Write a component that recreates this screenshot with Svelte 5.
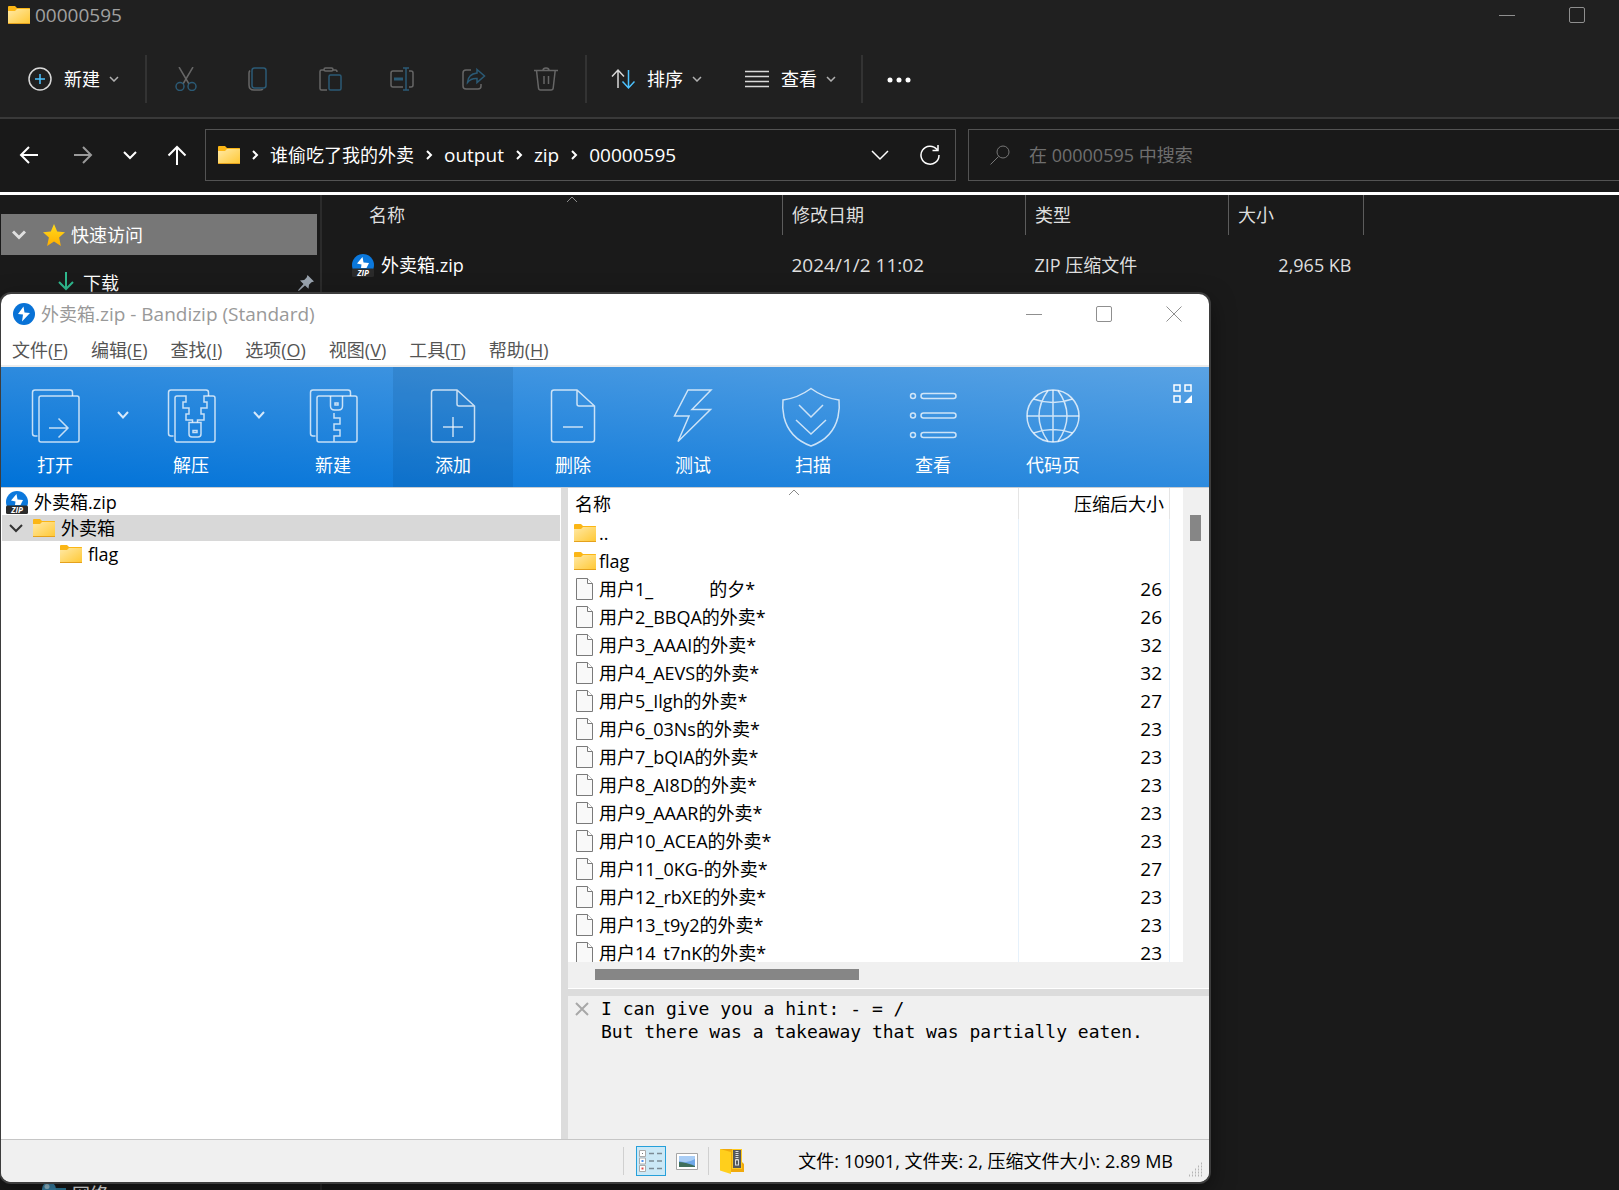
<script lang="ts">
  interface Entry {
    name: string;
    size?: number;
    folder?: boolean;
  }

  const crumbs = ['谁偷吃了我的外卖', 'output', 'zip', '00000595'];

  const menus = [
    { label: '文件', key: 'F' },
    { label: '编辑', key: 'E' },
    { label: '查找', key: 'I' },
    { label: '选项', key: 'O' },
    { label: '视图', key: 'V' },
    { label: '工具', key: 'T' },
    { label: '帮助', key: 'H' }
  ];

  const tools = [
    { id: 'open', label: '打开', more: true },
    { id: 'extract', label: '解压', more: true },
    { id: 'new', label: '新建' },
    { id: 'add', label: '添加' },
    { id: 'delete', label: '删除' },
    { id: 'test', label: '测试' },
    { id: 'scan', label: '扫描' },
    { id: 'view', label: '查看' },
    { id: 'codepage', label: '代码页' }
  ];

  const entries: Entry[] = [
    { name: '..', folder: true },
    { name: 'flag', folder: true },
    { name: '用户1_' + '\u00a0'.repeat(12) + '的夕*', size: 26 },
    { name: '用户2_BBQA的外卖*', size: 26 },
    { name: '用户3_AAAI的外卖*', size: 32 },
    { name: '用户4_AEVS的外卖*', size: 32 },
    { name: '用户5_Ilgh的外卖*', size: 27 },
    { name: '用户6_03Ns的外卖*', size: 23 },
    { name: '用户7_bQIA的外卖*', size: 23 },
    { name: '用户8_AI8D的外卖*', size: 23 },
    { name: '用户9_AAAR的外卖*', size: 23 },
    { name: '用户10_ACEA的外卖*', size: 23 },
    { name: '用户11_0KG-的外卖*', size: 27 },
    { name: '用户12_rbXE的外卖*', size: 23 },
    { name: '用户13_t9y2的外卖*', size: 23 },
    { name: '用户14_t7nK的外卖*', size: 23 }
  ];

  let activeTool = $state('add');
  let query = $state('');
  let showComment = $state(true);
</script>

{#snippet folder()}
  <svg class="folder" viewBox="0 0 22 18" aria-hidden="true">
    <path d="M0 1q0-1 1-1h6l2 2h12.500q.5 0 .5.5V8H0z" fill="#fbb615" />
    <path d="M0 5h7l2-2h13v14.500H0z" fill="url(#folder-fill)" />
    <path d="M0 17h22v1H0z" fill="#e5a11c" />
  </svg>
{/snippet}

{#snippet zip()}
  <svg class="zip" viewBox="0 0 22 23" aria-hidden="true">
    <circle cx="11" cy="11" r="11" fill="#0b78dc" />
    <path d="M10.500 3 5 9.500l4.500 1-.5 3.500h5.500l2.500-5-5.500-.5z" fill="#fff" />
    <rect x="0" y="14.500" width="22" height="8.500" rx="1.500" fill="#2b2b2b" />
    <text x="11" y="21.500" text-anchor="middle" fill="#fff" font-size="8" font-weight="700" font-style="italic">ZIP</text>
  </svg>
{/snippet}

{#snippet chevron()}
  <svg class="chev" viewBox="0 0 10 6" aria-hidden="true"><path d="m1 1 4 4 4-4" /></svg>
{/snippet}

{#snippet caption()}
  <button type="button" aria-label="最小化"><svg viewBox="0 0 16 16"><path d="M0 8.500h16" /></svg></button>
  <button type="button" aria-label="最大化"><svg viewBox="0 0 16 16"><rect x=".5" y=".5" width="15" height="15" rx="1.500" /></svg></button>
  <button type="button" aria-label="关闭"><svg viewBox="0 0 16 16"><path d="m.5.5 15 15m0-15-15 15" /></svg></button>
{/snippet}

<svg class="defs" aria-hidden="true">
  <defs>
    <linearGradient id="folder-fill" x1="0" y1="0" x2="1" y2="1">
      <stop offset="0" stop-color="#ffe9a6" />
      <stop offset="1" stop-color="#ffc834" />
    </linearGradient>
    <linearGradient id="star-fill" x1="0" y1="0" x2="0" y2="1">
      <stop offset="0" stop-color="#ffdb1c" />
      <stop offset="1" stop-color="#ffae00" />
    </linearGradient>
  </defs>
</svg>

<div class="explorer">
  <header class="titlebar">
    {@render folder()}
    <span class="title latin">00000595</span>
    <div class="caption">{@render caption()}</div>
  </header>

  <div class="commands">
    <button type="button" class="command command--new">
      <svg viewBox="0 0 24 24"><circle cx="12" cy="12" r="11" /><path class="accent" d="M12 7v10M7 12h10" /></svg>
      新建 {@render chevron()}
    </button>
    <span class="rule"></span>
    <div class="icons">
      <button type="button" disabled aria-label="剪切">
        <svg viewBox="0 0 24 24"><path d="M5 0l10 17M19 0 9 17" /><circle class="accent" cx="6" cy="19.500" r="4" /><circle class="accent" cx="18" cy="19.500" r="4" /></svg>
      </button>
      <button type="button" disabled aria-label="复制">
        <svg viewBox="0 0 24 24"><path d="M4 3.500Q3 4.500 3 6v12q0 5 5 5h6q2 0 3-1" /><rect class="accent" x="6" y="1" width="14" height="20" rx="2.500" /></svg>
      </button>
      <button type="button" disabled aria-label="粘贴">
        <svg viewBox="0 0 24 24"><path d="M6 3H3.500Q2 3 2 4.500v17Q2 23 3.500 23H9M15 3h2.500Q19 3 19 5" /><rect x="6" y="1" width="9" height="3" rx="1.500" /><rect class="accent" x="11" y="8" width="12" height="15" rx="1.500" /></svg>
      </button>
      <button type="button" disabled aria-label="重命名">
        <svg viewBox="0 0 24 24"><path d="M13 4H3Q1 4 1 6v12q0 2 2 2h10M19 4h2q2 0 2 2v12q0 2-2 2h-2" /><path class="accent" d="M16 1v22M13 1h6M13 23h6" /><path class="accent thick" d="M4 12h9" /></svg>
      </button>
      <button type="button" disabled aria-label="共享">
        <svg viewBox="0 0 24 24"><path d="M9 3H4Q1 3 1 6v13q0 3 3 3h12q3 0 3-3v-2" /><path class="accent" d="M15 2.500 22.500 9 15 15.500v-4q-6-.5-9.500 4 .5-8.500 9.500-9.500z" /></svg>
      </button>
      <button type="button" disabled aria-label="删除">
        <svg viewBox="0 0 24 24"><path d="M0 3.500h24M2.500 3.500l2 17.500q.2 2 2 2h10.500q2 0 2.200-2l2-17.500M9 3.500q0-2.500 3-2.500t3 2.500M10 9v8M14.500 9v8" /></svg>
      </button>
    </div>
    <span class="rule"></span>
    <button type="button" class="command command--sort">
      <svg viewBox="0 0 24 24"><path d="M7 21V3M1 9.500 7 3l6 6.500" /><path class="accent" d="M17.500 3v18M11.500 14.500l6 6.500 6-6.500" /></svg>
      排序 {@render chevron()}
    </button>
    <button type="button" class="command command--view">
      <svg viewBox="0 0 24 24"><path d="M0 4.500h24M0 9.500h24M0 14.500h24M0 19.500h24" /></svg>
      查看 {@render chevron()}
    </button>
    <span class="rule"></span>
    <button type="button" class="command command--more" aria-label="更多">
      <svg viewBox="0 0 24 24"><g fill="#fff" stroke="none"><circle cx="3" cy="13" r="2.500" /><circle cx="12" cy="13" r="2.500" /><circle cx="21" cy="13" r="2.500" /></g></svg>
    </button>
  </div>

  <div class="navbar">
    <nav class="history">
      <button type="button" aria-label="返回"><svg viewBox="0 0 20 20"><path d="M19 10H2M10 2l-8 8 8 8" /></svg></button>
      <button type="button" class="dim" aria-label="前进"><svg viewBox="0 0 20 20"><path d="M1 10h17M10 2l8 8-8 8" /></svg></button>
      <button type="button" aria-label="最近位置"><svg viewBox="0 0 20 20"><path d="m4 7 6 6 6-6" /></svg></button>
      <button type="button" aria-label="上移"><svg viewBox="0 0 20 20"><path d="M10 20V2M1.500 10.500 10 2l8.500 8.500" /></svg></button>
    </nav>
    <div class="address">
      {@render folder()}
      {#each crumbs as crumb, i}
        <svg class="sep" viewBox="0 0 8 10" aria-hidden="true"><path d="m2 1 4 4-4 4" /></svg>
        <a href="#{i}" class:latin={i > 0}>{crumb}</a>
      {/each}
      <div class="address-end">
        <button type="button" aria-label="历史记录"><svg viewBox="0 0 20 20"><path d="m2 6 8 8 8-8" /></svg></button>
        <button type="button" aria-label="刷新"><svg viewBox="0 0 20 20"><path d="M17 4.500A9 9 0 1 0 19 10M18 0v5.500h-5.500" /></svg></button>
      </div>
    </div>
    <label class="search">
      <svg viewBox="0 0 20 20" aria-hidden="true"><circle cx="13" cy="7" r="6" /><path d="m8.500 11.500-8 8" /></svg>
      <input type="text" placeholder="在 00000595 中搜索" aria-label="搜索" bind:value={query} />
    </label>
  </div>

  <div class="content">
    <aside class="sidebar">
      <button type="button" class="quick">
        <svg class="expander" viewBox="0 0 14 10"><path d="m1 1.500 6 6 6-6" /></svg>
        <svg class="star" viewBox="0 0 22 22"><path d="m11 0 3.200 7.400 7.800.8-5.900 5.300 1.800 8.500L11 17.600 4.100 22l1.800-8.500L0 8.200l7.800-.8z" fill="url(#star-fill)" /></svg>
        快速访问
      </button>
      <button type="button" class="pinned">
        <svg class="download" viewBox="0 0 16 24"><path d="M8 1v16M1 11l7 7 7-7M0 22.500h16" /></svg>
        下载
        <svg class="pin" viewBox="0 0 16 16"><path d="M9.500 0 16 6.500l-2.500.8-2.500 2.500-.5 4L7 10.500.8 16 0 15.200 5.500 9 2 5.500l4.200-.5L8.700 2.500z" fill="#9aa4af" /></svg>
      </button>
      <div class="network">
        <svg class="globe" viewBox="0 0 24 20"><rect x="10" y="6" width="14" height="12" fill="#2f86a8" /><circle cx="7" cy="7" r="7" fill="#3d8fb8" /><circle cx="5" cy="4.500" r="2.500" fill="#a8d5e8" /></svg>
        网络
      </div>
    </aside>

    <table class="files">
      <thead>
        <tr>
          <th class="c-name"><svg class="sort" viewBox="0 0 12 7"><path d="m1 6 5-5 5 5" /></svg>名称</th>
          <th class="c-date">修改日期</th>
          <th class="c-type">类型</th>
          <th class="c-size">大小</th>
          <th></th>
        </tr>
      </thead>
      <tbody>
        <tr>
          <td><span class="file">{@render zip()} 外卖箱.zip</span></td>
          <td class="latin">2024/1/2 11:02</td>
          <td>ZIP 压缩文件</td>
          <td class="num">2,965 KB</td>
          <td></td>
        </tr>
      </tbody>
    </table>
  </div>

  <section class="archive" aria-label="Bandizip">
    <header class="archive-title">
      <svg class="logo" viewBox="0 0 22 22" aria-hidden="true">
        <circle cx="11" cy="11" r="11" fill="#0872d6" />
        <path d="M10.500 3.500 5 11l5 .5L9 18.500l8-8.500-5.500-.5z" fill="#fff" />
      </svg>
      <span>外卖箱<span class="latin">.zip - Bandizip (Standard)</span></span>
      <div class="caption">{@render caption()}</div>
    </header>

    <nav class="menubar">
      {#each menus as menu}
        <button type="button">{menu.label}(<u>{menu.key}</u>)</button>
      {/each}
    </nav>

    <div class="ribbon">
      {#each tools as tool}
        <button
          type="button"
          class="tool"
          class:tool--split={tool.more}
          class:tool--active={activeTool === tool.id}
          onclick={() => (activeTool = tool.id)}
        >
          <svg viewBox="0 0 56 60" aria-hidden="true">
            {#if tool.id === 'open'}
              <path d="M10.500 49H8q-2.500 0-2.500-2.500v-41Q5.500 3 8 3h35q2.500 0 2.500 2.500V9" />
              <rect x="12" y="9" width="40" height="46" rx="2" />
              <path d="M22 41h19M31.500 31.500l9.500 9.500-9.500 9.500" />
            {:else if tool.id === 'extract'}
              <path d="M10.500 49H8q-2.500 0-2.500-2.500v-41Q5.500 3 8 3h35q2.500 0 2.500 2.500V9" />
              <path d="M29.500 35.500V33h-6.500v-6h3v-6h-6v-6h3V9h-9q-2 0-2 2v42q0 2 2 2h36q2 0 2-2V11q0-2-2-2h-9v6h3v6h-6v6h3v6h-6.500v2.500" />
              <path d="M26 35.500h12v11.500q0 3-3 3h-6q-3 0-3-3z" />
              <rect x="30" y="43.500" width="4" height="2" />
            {:else if tool.id === 'new'}
              <path d="M10.500 49H8q-2.500 0-2.500-2.500v-41Q5.500 3 8 3h35q2.500 0 2.500 2.500V9" />
              <path d="M28.500 55H14q-2 0-2-2V11q0-2 2-2h36q2 0 2 2v42q0 2-2 2H29v-6h6v-6h-6v-6h6v-6h-6v-5" />
              <path d="M25.500 9v10q0 4 4 4h4q4 0 4-4V9" />
              <rect x="30" y="16" width="3" height="2" />
            {:else if tool.id === 'add' || tool.id === 'delete'}
              <path d="M32 3H9Q6.500 3 6.500 5.500v47Q6.500 55 9 55h38q2.500 0 2.500-2.500V19zM32 3v14q0 2 2 2h15.500" />
              <path d="M18 40h20" />
              {#if tool.id === 'add'}<path d="M28 30v20" />{/if}
            {:else if tool.id === 'test'}
              <path d="M23 3h23L27 22.500h18.500L13 54.500l11-25.500H9.500z" />
            {:else if tool.id === 'scan'}
              <path d="M26 1.500q13 9.500 28 11.500 1 8-1 17-5 21-27 29Q4 51-1 30q-2-9-1-17Q13 11 26 1.500z" />
              <path d="m14 18 12 12 12-12M11 33l15 14 15-14" />
            {:else if tool.id === 'view'}
              <circle cx="8" cy="9" r="2.500" /><rect x="16" y="6.500" width="35" height="5" rx="2.500" />
              <circle cx="8" cy="28.500" r="2.500" /><rect x="16" y="26" width="35" height="5" rx="2.500" />
              <circle cx="8" cy="48" r="2.500" /><rect x="16" y="45.500" width="35" height="5" rx="2.500" />
            {:else}
              <circle cx="28" cy="29" r="26" />
              <path d="M2 29h52M28 3v52M8.500 12q19.500 7 39 0M8.500 46q19.500-7 39 0M23 3.500q-18 25 0 51M33 3.500q18 25 0 51" />
            {/if}
          </svg>
          {tool.label}
        </button>
        {#if tool.more}
          <button type="button" class="more" aria-label="{tool.label}选项">
            <svg viewBox="0 0 12 8"><path d="m1 1 5 5.500L11 1" /></svg>
          </button>
        {/if}
      {/each}
      <button type="button" class="layout" aria-label="布局">
        <svg viewBox="0 0 20 20"><path d="M1 1h6v6H1zM12 1h6v6h-6zM1 12h6v6H1z" /><path d="M19 11v8h-8z" fill="#fff" stroke="none" /></svg>
      </button>
    </div>

    <div class="panes">
      <ul class="tree">
        <li><button type="button" class="root">{@render zip()} 外卖箱.zip</button></li>
        <li>
          <button type="button" class="branch">
            <svg class="expander" viewBox="0 0 14 10"><path d="m1 2 6 6 6-6" /></svg>
            {@render folder()} 外卖箱
          </button>
        </li>
        <li><button type="button" class="leaf">{@render folder()} flag</button></li>
      </ul>

      <div class="detail">
        <div class="listing">
          <div class="viewport">
            <table>
              <thead>
                <tr>
                  <th class="l-name"><svg class="sort" viewBox="0 0 12 7"><path d="m1 6 5-5 5 5" /></svg>名称</th>
                  <th class="l-size">压缩后大小</th>
                  <th></th>
                </tr>
              </thead>
              <tbody>
                {#each entries as entry}
                  <tr>
                    <td>
                      <span class="entry">
                        {#if entry.folder}
                          {@render folder()}
                        {:else}
                          <svg class="page" viewBox="0 0 22 24" aria-hidden="true">
                            <path d="M2.500 1.500h11l5 5v16h-16z" fill="#f9f9f9" stroke="#7a7a7a" />
                            <path d="M13.500 1.500v5h5" fill="#fff" stroke="#7a7a7a" />
                          </svg>
                        {/if}
                        {entry.name}
                      </span>
                    </td>
                    <td class="num">{entry.size ?? ''}</td>
                    <td></td>
                  </tr>
                {/each}
              </tbody>
            </table>
          </div>
          <div class="vbar"><span></span></div>
          <div class="hbar"><span></span></div>
        </div>

        <div class="comment">
          {#if showComment}
            <button type="button" aria-label="关闭注释" onclick={() => (showComment = false)}>
              <svg viewBox="0 0 14 14"><path d="m1 1 12 12M13 1 1 13" /></svg>
            </button>
            <pre>I can give you a hint: - = /
But there was a takeaway that was partially eaten.</pre>
          {/if}
        </div>
      </div>
    </div>

    <footer class="status">
      <span class="bar"></span>
      <button type="button" class="mode mode--on" aria-label="详细信息">
        <svg viewBox="0 0 26 26">
          <path d="M1.500 2.500h6v6h-6zM1.500 10h6v6h-6zM1.500 17.500h6v6h-6z" fill="#fff" stroke="#aaa" />
          <path d="M4 5h1v1H4z" fill="#777" /><path d="M3.500 12h2v2h-2z" fill="#4a90f0" /><path d="M3.500 19.500h2v2h-2z" fill="#e04a4a" />
          <path d="M11 5.500h5M19 5.500h5M11 13h5M19 13h5M11 20.500h5M19 20.500h5" stroke="#7c8a94" stroke-width="1.500" />
        </svg>
      </button>
      <button type="button" class="mode" aria-label="图标">
        <svg viewBox="0 0 26 26"><path d="M2.500 5.500h21v16h-21z" fill="#fff" stroke="#a5a5a5" /><path d="M5 8h16v11H5z" fill="#6fa8e8" /><path d="M5 8h16v3q-8 5-16 2z" fill="#a9cdf5" /><path d="M5 14q6 0 16 4v1H5z" fill="#3f6f5c" /></svg>
      </button>
      <span class="bar"></span>
      <svg class="book" viewBox="0 0 26 28" aria-hidden="true">
        <path d="M1 2h22v13l2 2v8H12z" fill="#f0a90c" />
        <path d="M13 2h10v20H13z" fill="#ffc91e" />
        <path d="M1 2l11 3v22L1 23.500z" fill="#ffcf1c" />
        <path d="M14 3h8v18h-8z" fill="#55585c" />
        <path d="M18 4v9" stroke="#ddd" stroke-width="3" stroke-dasharray="1 1" />
        <rect x="16.500" y="13" width="3" height="5" stroke="#ddd" />
      </svg>
      <span class="summary">文件: 10901, 文件夹: 2, 压缩文件大小: 2.89 MB</span>
      <svg class="grip" viewBox="0 0 16 16" aria-hidden="true">
        <path d="M1 14.500h14M4 11.500h11M7 8.500h8M10 5.500h5M13 2.500h2" />
      </svg>
    </footer>
  </section>
</div>

<style>
:global(body) {
  margin: 0;
  overflow: hidden;
  background: #191919;
}

.explorer {
  position: relative;
  display: flex;
  flex-direction: column;
  height: 100vh;
  overflow: hidden;
  background: #1a1a1a;
  color: #fff;
  font-family: "Open Sans", "Noto Sans CJK SC", sans-serif;
  font-size: 18px;
  line-height: 24px;
}

.latin {
  font-size: 19px;
}

button {
  display: flex;
  align-items: center;
  flex: none;
  margin: 0;
  padding: 0;
  border: 0;
  background: none;
  color: inherit;
  font: inherit;
  white-space: nowrap;
}

svg {
  display: block;
  flex: none;
  fill: none;
}

.defs {
  position: absolute;
  width: 0;
  height: 0;
}

.folder {
  width: 22px;
  height: 18px;
}

.zip {
  width: 22px;
  height: 23px;
}

.chev {
  width: 10px;
  height: 6px;
  stroke: #b5b5b5;
}

.caption {
  display: flex;
  margin-left: auto;
}

.caption button {
  justify-content: center;
  width: 70px;
  height: 30px;
}

.caption svg {
  width: 16px;
  height: 16px;
  stroke: #8f8f8f;
}

/* explorer chrome */
.titlebar {
  display: flex;
  align-items: center;
  flex: none;
  gap: 5px;
  height: 30px;
  padding-left: 8px;
  background: #202020;
  color: #a0a0a0;
}

.titlebar .caption {
  margin-right: -63px;
}

.commands {
  display: flex;
  align-items: center;
  box-sizing: border-box;
  flex: none;
  height: 89px;
  padding-top: 10px;
  border-bottom: 2px solid #393939;
  background: #202020;
}

.commands svg {
  stroke: #d8d8d8;
  stroke-width: 1.5;
}

.commands svg:not(.chev) {
  width: 24px;
  height: 24px;
}

.commands .chev {
  stroke: #b0b0b0;
}

.commands .accent {
  stroke: #4cc2ff;
}

.command {
  height: 48px;
}

.command .chev {
  margin-left: 9px;
}

.command--new {
  padding: 0 26px 0 28px;
}

.command--new svg:first-child {
  margin-right: 12px;
}

.command--sort {
  padding: 0 43px 0 24px;
}

.command--sort svg:first-child,
.command--view svg:first-child {
  margin-right: 12px;
}

.command--view {
  padding-right: 25px;
}

.command--more {
  padding: 0 24px;
}

.rule {
  flex: none;
  width: 2px;
  height: 48px;
  background: #333;
}

.icons {
  display: flex;
  gap: 48px;
  padding: 0 27px;
}

.icons svg {
  stroke: #666;
}

.icons .accent {
  stroke: #2b5a75;
}

.icons .thick {
  stroke-width: 3;
}

.navbar {
  display: flex;
  align-items: center;
  box-sizing: border-box;
  flex: none;
  gap: 12px;
  height: 76px;
  padding-bottom: 2px;
  border-bottom: 3px solid #fff;
  background: #191919;
}

.history {
  display: flex;
  align-items: center;
  flex: none;
  gap: 27px;
  width: 174px;
  padding-left: 19px;
  box-sizing: border-box;
  margin-right: 19px;
}

.history svg,
.address-end svg,
.search svg {
  width: 20px;
  height: 20px;
  stroke: #fff;
  stroke-width: 2;
}

.history button:nth-child(2) {
  margin-left: 7px;
}

.history .dim svg {
  stroke: #9a9a9a;
}

.address {
  display: flex;
  align-items: center;
  box-sizing: border-box;
  flex: 1 1 0;
  height: 52px;
  padding: 0 15px 0 12px;
  border: 1px solid #535353;
}

.address a {
  color: #fff;
  text-decoration: none;
  white-space: nowrap;
}

.sep {
  width: 8px;
  height: 10px;
  margin: 0 11px;
  stroke: #fff;
  stroke-width: 2;
}

.address-end {
  display: flex;
  gap: 30px;
  margin-left: auto;
}

.address-end svg {
  stroke-width: 1.5;
}

.search {
  display: flex;
  align-items: center;
  box-sizing: border-box;
  flex: none;
  gap: 19px;
  width: 651px;
  height: 52px;
  padding-left: 21px;
  border: 1px solid #535353;
  border-right: 0;
}

.search svg {
  stroke: #777;
  stroke-width: 1;
}

.search input {
  flex: 1;
  min-width: 0;
  padding: 0;
  border: 0;
  outline: none;
  background: none;
  color: #fff;
  font: inherit;
}

.search input::placeholder {
  color: #6e6e6e;
  opacity: 1;
}

.content {
  display: flex;
  flex: 1;
  min-height: 0;
}

.sidebar {
  display: flex;
  flex-direction: column;
  box-sizing: border-box;
  flex: none;
  width: 322px;
  padding: 19px 3px 0 1px;
  border-right: 2px solid #2b2b2b;
}

.quick {
  height: 41px;
  padding-left: 11px;
  background: #777;
}

.quick .expander {
  width: 14px;
  height: 10px;
  margin-right: 17px;
  stroke: #e0e0e0;
  stroke-width: 3;
}

.star {
  width: 22px;
  height: 22px;
  margin-right: 6px;
}

.pinned {
  height: 56px;
  padding: 0 3px 0 57px;
}

.download {
  width: 16px;
  height: 24px;
  margin-right: 9px;
  stroke: #2fb98e;
  stroke-width: 2;
}

.pin {
  width: 16px;
  height: 16px;
  margin-left: auto;
}

.network {
  display: flex;
  align-items: flex-start;
  gap: 6px;
  height: 8px;
  margin-top: auto;
  padding-left: 41px;
}

.globe {
  width: 24px;
  height: 20px;
}

/* file table */
table {
  border-collapse: collapse;
  table-layout: fixed;
  width: 100%;
}

th,
td {
  padding: 0;
  font-weight: 400;
  text-align: left;
  white-space: nowrap;
}

.files {
  flex: 1;
  align-self: flex-start;
}

.files th {
  position: relative;
  height: 40px;
  padding-left: 9px;
  border-right: 1px solid #5c5c5c;
  color: #dedede;
}

.files th:last-child {
  border-right: 0;
}

.files td {
  height: 60px;
  padding-left: 9px;
  color: #dedede;
}

.files .c-name {
  width: 413px;
  padding-left: 47px;
}

.c-date {
  width: 233px;
}

.c-type {
  width: 193px;
}

.c-size {
  width: 125px;
}

.files td:first-child {
  padding-left: 30px;
  color: #fff;
}

.files .num {
  padding: 0 12px 0 0;
}

.file {
  display: flex;
  align-items: center;
  gap: 7px;
}

.sort {
  position: absolute;
  top: 1px;
  left: 220px;
  width: 12px;
  height: 7px;
  stroke: #8a8a8a;
}

.files .sort {
  left: 244px;
}

.num {
  text-align: right;
}

/* archive window floating over the explorer */
.archive {
  position: absolute;
  top: 294px;
  right: 410px;
  bottom: 8px;
  left: 1px;
  display: flex;
  flex-direction: column;
  overflow: hidden;
  border-radius: 10px;
  background: #fff;
  box-shadow: 0 0 0 2px #3d3d3d, 0 8px 24px rgba(0, 0, 0, 0.5);
  color: #000;
}

.archive-title {
  display: flex;
  align-items: center;
  flex: none;
  gap: 6px;
  height: 40px;
  padding-left: 12px;
  color: #999;
}

.logo {
  width: 22px;
  height: 22px;
}

.menubar {
  display: flex;
  flex: none;
  gap: 23px;
  height: 31px;
  padding: 1px 11px 0;
  border-bottom: 2px solid #ececec;
  box-sizing: content-box;
  height: 30px;
  color: #555;
}

.menubar u {
  text-underline-offset: 2px;
}

.ribbon {
  display: flex;
  flex: none;
  height: 120px;
  border-bottom: 1px solid #c8cdd2;
  background: linear-gradient(to top right, #0072d8, #5aa3e4);
  color: #fff;
}

.tool {
  flex-direction: column;
  justify-content: flex-start;
  gap: 6px;
  box-sizing: border-box;
  width: 120px;
  height: 120px;
  padding-top: 20px;
}

.tool--split {
  width: 108px;
}

.tool--active {
  background: rgba(0, 50, 100, 0.12);
}

.tool svg {
  width: 56px;
  height: 60px;
  overflow: visible;
  stroke: rgba(255, 255, 255, 0.75);
  stroke-width: 1.5;
}

.more {
  justify-content: center;
  width: 28px;
  padding-bottom: 24px;
}

.more svg {
  width: 12px;
  height: 8px;
  stroke: #d5e8fa;
  stroke-width: 2;
}

.layout {
  align-self: flex-start;
  margin: 17px 16px 0 auto;
}

.layout svg {
  width: 20px;
  height: 20px;
  stroke: #fff;
  stroke-width: 1.5;
}

.panes {
  display: flex;
  flex: 1;
  min-height: 0;
}

.tree {
  box-sizing: border-box;
  flex: none;
  width: 567px;
  margin: 0;
  padding: 1px 1px 0 1px;
  border-right: 7px solid #dcdcdc;
  list-style: none;
}

.tree button {
  width: 100%;
  height: 26px;
}

.root {
  gap: 6px;
  padding-left: 4px;
}

.branch {
  gap: 6px;
  padding-left: 7px;
  background: #d8d8d8;
}

.branch .expander {
  width: 14px;
  height: 10px;
  margin-right: 4px;
  stroke: #333;
  stroke-width: 2;
}

.leaf {
  gap: 6px;
  padding-left: 58px;
}

.detail {
  display: flex;
  flex: 1;
  flex-direction: column;
  min-width: 0;
}

.listing {
  display: grid;
  grid-template: minmax(0, 1fr) 26px / minmax(0, 1fr) 26px;
  flex: 1;
  min-height: 0;
  border-bottom: 1px solid #fff;
}

.viewport {
  overflow: hidden;
}

.viewport th {
  position: relative;
  height: 31px;
  padding-left: 7px;
}

.viewport th:not(:last-child) {
  border-right: 1px solid #e5e5e5;
}

.viewport .l-name {
  width: 443px;
}

.viewport .l-size {
  width: 145px;
  padding: 0 5px 0 0;
  text-align: right;
}

.viewport td {
  height: 28px;
  padding-left: 6px;
  line-height: 20px;
}

.viewport td:not(:last-child) {
  border-right: 1px solid #e6f1fb;
}

.viewport .num {
  padding: 0 7px 0 0;
  font-size: 19px;
}

.entry {
  display: flex;
  align-items: center;
  gap: 3px;
}

.page {
  width: 22px;
  height: 24px;
}

.vbar {
  background: #f0f0f0;
}

.vbar span {
  display: block;
  width: 11px;
  height: 26px;
  margin: 27px auto 0 7px;
  background: #868686;
}

.hbar {
  grid-column: 1 / -1;
  background: #f0f0f0;
}

.hbar span {
  display: block;
  width: 264px;
  height: 11px;
  margin: 7px 0 0 27px;
  background: #868686;
}

.comment {
  display: flex;
  align-items: flex-start;
  box-sizing: border-box;
  flex: none;
  gap: 12px;
  height: 150px;
  padding: 1px 7px;
  border-top: 7px solid #dcdcdc;
  background: #f0f0f0;
}

.comment button {
  height: 23px;
}

.comment svg {
  width: 14px;
  height: 14px;
  stroke: #a8a8a8;
  stroke-width: 2;
}

.comment pre {
  margin: 0;
  font-family: "DejaVu Sans Mono", monospace;
  font-size: 18px;
  line-height: 23px;
}

.status {
  display: flex;
  align-items: center;
  flex: none;
  height: 42px;
  border-top: 1px solid #c6c6c6;
  background: #f0f0f0;
}

.bar {
  width: 1px;
  height: 28px;
  background: #d0d0d0;
}

.bar:first-child {
  margin: 0 12px 0 622px;
}

.mode {
  box-sizing: border-box;
  justify-content: center;
  width: 30px;
  height: 30px;
  margin-right: 6px;
  border: 1px solid transparent;
}

.mode--on {
  border-color: #26a0da;
  background: #cbe8f6;
}

.mode svg {
  width: 26px;
  height: 26px;
}

.book {
  width: 26px;
  height: 28px;
  margin-left: 10px;
}

.summary {
  margin-left: auto;
  white-space: nowrap;
}

.grip {
  align-self: flex-end;
  width: 16px;
  height: 16px;
  margin: 0 5px 5px 15px;
  stroke: #b5b5b5;
  stroke-width: 2;
  stroke-dasharray: 1 2;
}
</style>
